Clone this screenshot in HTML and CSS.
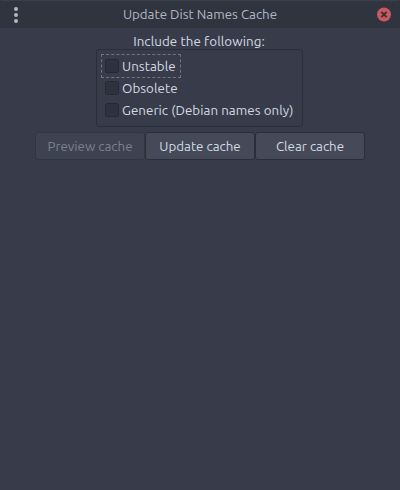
FILE: index.html
```html
<!DOCTYPE html>
<html lang="en">
<head>
<meta charset="utf-8">
<title>Update Dist Names Cache</title>
<link rel="stylesheet" href="styles.css">
</head>
<body>
<div class="window">
  <header class="titlebar">
    <svg class="menu" viewBox="0 0 16 18" width="16" height="18"><circle cx="8" cy="3" r="2"/><circle cx="8" cy="9" r="2"/><circle cx="8" cy="15" r="2"/></svg>
    <h1 class="title">Update Dist Names Cache</h1>
    <svg class="close" viewBox="0 0 16 16" width="16" height="16"><circle cx="8" cy="7.5" r="7"/><path d="M5.4 4.9l5.2 5.2M10.6 4.9l-5.2 5.2"/></svg>
  </header>
  <main class="content">
    <p class="caption">Include the following:</p>
    <div class="options">
      <label class="option focused"><span class="box"></span><span class="label">Unstable</span></label>
      <label class="option"><span class="box"></span><span class="label">Obsolete</span></label>
      <label class="option"><span class="box"></span><span class="label">Generic (Debian names only)</span></label>
    </div>
    <div class="actions">
      <button class="button" disabled>Preview cache</button>
      <button class="button">Update cache</button>
      <button class="button">Clear cache</button>
    </div>
  </main>
</div>
</body>
</html>
```
FILE: styles.css
```css
* { box-sizing: border-box; }
body { margin: 0; font: 13.33px/18px Ubuntu, "Noto Sans", sans-serif; color: #d3dae3; background: #23262e; }
.window { width: 400px; height: 490px; background: #383c4a; border-radius: 2px 2px 0 0; overflow: hidden; }
.titlebar { height: 28px; background: #2f343f; border-top: 1px solid #3a3f4b; display: flex; align-items: center; justify-content: space-between; padding: 0 8px; }
.title { margin: 0; font-size: 13.33px; font-weight: 400; color: #afb8c5; white-space: nowrap; }
.menu { fill: #afb8c5; }
.close circle { fill: #cc575d; }
.close path { stroke: #2f343f; stroke-width: 2; }
.content { display: flex; flex-direction: column; align-items: center; padding-top: 5px; }
.caption { margin: 0; padding-right: 2px; height: 16px; line-height: 18px; letter-spacing: 0.1px; }
.options { width: 207px; height: 78px; margin-right: 1px; border: 1px solid #2b2e39; border-radius: 3px; padding: 5px; display: flex; flex-direction: column; align-items: flex-start; }
.option { display: flex; align-items: center; gap: 3px; height: 22px; padding: 0 3px; letter-spacing: 0.06px; white-space: nowrap; }
.focused { width: 78px; outline: 1px dashed #717682; }
.box { width: 14px; height: 14px; border: 1px solid #262933; border-radius: 2px; background: #2e323f; }
.label { padding-top: 2px; }
.actions { display: flex; margin-top: 5px; }
.button { width: 110px; height: 28px; border: 1px solid #2b2e39; border-radius: 3px; background: #444a58; color: #d3dae3; font: inherit; padding: 2px 0 0; }
.button:disabled { background: #3e4351; border-color: #323643; color: #7c818c; }
```
